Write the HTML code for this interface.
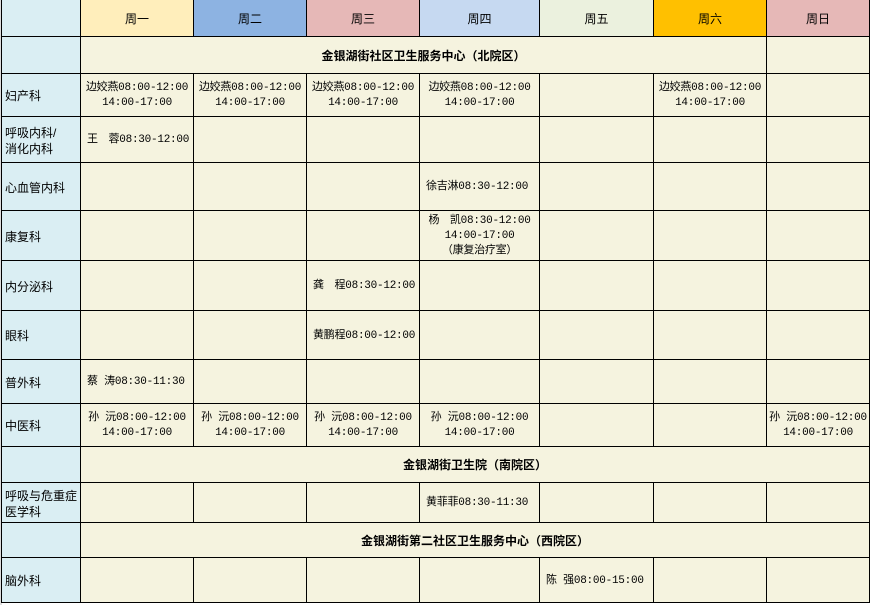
<!DOCTYPE html>
<html><head><meta charset="utf-8"><style>
body{margin:0;width:873px;height:605px;background:#fff;overflow:hidden;font-family:"Liberation Mono","Noto Sans CJK SC",monospace;}
table{position:absolute;left:1px;top:-1px;border-collapse:collapse;table-layout:fixed;width:869px;}
td{border:1px solid #000;background:#F5F3DF;font-size:11px;line-height:15px;text-align:center;padding:2px 0 0 0;color:#000;white-space:nowrap;overflow:hidden;letter-spacing:-0.25px;}
td.h{background:#DAEEF3;text-align:left;padding-left:3px;font-family:"Liberation Sans","Noto Sans CJK SC",sans-serif;font-size:12px;line-height:16px;white-space:normal;letter-spacing:0;}
td.l{text-align:left;padding-left:6px;}
td.s{font-weight:bold;font-family:"Liberation Sans","Noto Sans CJK SC",sans-serif;font-size:12px;letter-spacing:0;}
tr.hd td{font-family:"Liberation Sans","Noto Sans CJK SC",sans-serif;font-size:12px;letter-spacing:0;}
.strip{position:absolute;left:0;top:0;width:2px;height:605px;background:#ddd;}
</style></head><body>
<div class="strip"></div>
<table>
<colgroup><col style="width:79px"><col style="width:113px"><col style="width:113px"><col style="width:113px"><col style="width:120px"><col style="width:114px"><col style="width:113px"><col style="width:103px"></colgroup>
<tr class="hd" style="height:37px"><td class="h"></td><td style="background:#FFEEBB">周一</td><td style="background:#8DB3E2">周二</td><td style="background:#E6B8B7">周三</td><td style="background:#C6D9F1">周四</td><td style="background:#EBF1DE">周五</td><td style="background:#FFC000">周六</td><td style="background:#E6B8B7">周日</td></tr>
<tr style="height:37px"><td class="h"></td><td class="s" colspan="6">金银湖街社区卫生服务中心（北院区）</td><td></td></tr>
<tr style="height:43px"><td class="h">妇产科</td><td>边姣燕08:00-12:00<br>14:00-17:00</td><td>边姣燕08:00-12:00<br>14:00-17:00</td><td>边姣燕08:00-12:00<br>14:00-17:00</td><td>边姣燕08:00-12:00<br>14:00-17:00</td><td></td><td>边姣燕08:00-12:00<br>14:00-17:00</td><td></td></tr>
<tr style="height:46px"><td class="h">呼吸内科/<br>消化内科</td><td class="l">王　蓉08:30-12:00</td><td></td><td></td><td></td><td></td><td></td><td></td></tr>
<tr style="height:48px"><td class="h">心血管内科</td><td></td><td></td><td></td><td class="l">徐吉淋08:30-12:00</td><td></td><td></td><td></td></tr>
<tr style="height:50px"><td class="h">康复科</td><td></td><td></td><td></td><td>杨　凯08:30-12:00<br>14:00-17:00<br>（康复治疗室）</td><td></td><td></td><td></td></tr>
<tr style="height:50px"><td class="h">内分泌科</td><td></td><td></td><td class="l">龚　程08:30-12:00</td><td></td><td></td><td></td><td></td></tr>
<tr style="height:49px"><td class="h">眼科</td><td></td><td></td><td class="l">黄鹏程08:00-12:00</td><td></td><td></td><td></td><td></td></tr>
<tr style="height:44px"><td class="h">普外科</td><td class="l">蔡 涛08:30-11:30</td><td></td><td></td><td></td><td></td><td></td><td></td></tr>
<tr style="height:43px"><td class="h">中医科</td><td>孙 沅08:00-12:00<br>14:00-17:00</td><td>孙 沅08:00-12:00<br>14:00-17:00</td><td>孙 沅08:00-12:00<br>14:00-17:00</td><td>孙 沅08:00-12:00<br>14:00-17:00</td><td></td><td></td><td>孙 沅08:00-12:00<br>14:00-17:00</td></tr>
<tr style="height:36px"><td class="h"></td><td class="s" colspan="7">金银湖街卫生院（南院区）</td></tr>
<tr style="height:40px"><td class="h">呼吸与危重症<br>医学科</td><td></td><td></td><td></td><td class="l">黄菲菲08:30-11:30</td><td></td><td></td><td></td></tr>
<tr style="height:35px"><td class="h"></td><td class="s" colspan="7">金银湖街第二社区卫生服务中心（西院区）</td></tr>
<tr style="height:45px"><td class="h">脑外科</td><td></td><td></td><td></td><td></td><td class="l">陈 强08:00-15:00</td><td></td><td></td></tr>
</table>
</body></html>
